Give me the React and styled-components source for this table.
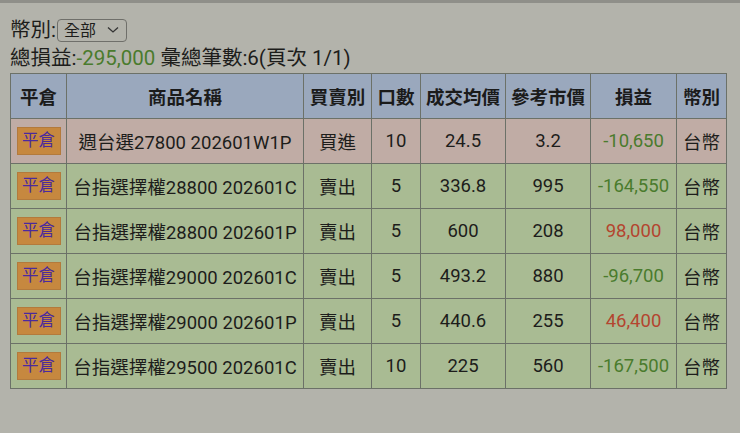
import React from "react";
import styled, { createGlobalStyle } from "styled-components";

const Global = createGlobalStyle`
  html, body { margin: 0; padding: 0; background: #b3b3ab; }
  body { font-family: Roboto, "Noto Sans CJK TC", sans-serif; color: #1d1d1b; }
`;

const Page = styled.div`
  width: 740px;
  height: 433px;
  box-sizing: border-box;
  border-top: 3px solid #8f8f89;
  padding: 15px 0 0 10px;
  background: #b3b3ab;
`;

const FilterRow = styled.div`
  display: flex;
  align-items: center;
  height: 24px;
  font-size: 20.5px;
  line-height: 24px;
`;

const SelectBox = styled.div`
  display: flex;
  align-items: center;
  justify-content: space-between;
  box-sizing: border-box;
  width: 70px;
  height: 23px;
  margin-left: 1px;
  padding: 0 7px 0 6px;
  border: 1px solid #6f6f6a;
  border-radius: 4px;
  font-size: 16px;
  line-height: 21px;
`;

const Summary = styled.div`
  height: 28px;
  margin-top: 2px;
  font-size: 20.5px;
  line-height: 28px;
  white-space: nowrap;
`;

const Loss = styled.span`
  color: ${(p) => (p.$neg ? "#4a7b2d" : "#b4452f")};
`;

const Table = styled.table`
  border-collapse: collapse;
  table-layout: fixed;
  width: 716px;
  font-size: 18.5px;
  margin-top: 1px;
`;

const Th = styled.th`
  height: 44px;
  padding: 0;
  background: #9aa8bd;
  border: 1px solid #6c7168;
  font-weight: bold;
  text-align: center;
  color: #1b1b1b;
`;

const Row = styled.tr`
  background: ${(p) => (p.$buy ? "#c0aca5" : "#a9bb93")};
`;

const Td = styled.td`
  height: 44px;
  padding: 0;
  border: 1px solid #6c7168;
  text-align: center;
  white-space: nowrap;
  color: ${(p) => p.$color || "#1d1d1b"};
`;

const CloseBtn = styled.span`
  display: inline-block;
  width: 44px;
  height: 28px;
  box-sizing: border-box;
  background: #c6883f;
  border: 1px solid #b37a3c;
  color: #4a2a9e;
  font-size: 16.5px;
  font-weight: normal;
  line-height: 26px;
  text-align: center;
  vertical-align: middle;
`;

const rows = [
  { buy: true, name: "週台選27800 202601W1P", side: "買進", qty: 10, avg: "24.5", ref: "3.2", pl: "-10,650" },
  { name: "台指選擇權28800 202601C", side: "賣出", qty: 5, avg: "336.8", ref: "995", pl: "-164,550" },
  { name: "台指選擇權28800 202601P", side: "賣出", qty: 5, avg: "600", ref: "208", pl: "98,000" },
  { name: "台指選擇權29000 202601C", side: "賣出", qty: 5, avg: "493.2", ref: "880", pl: "-96,700" },
  { name: "台指選擇權29000 202601P", side: "賣出", qty: 5, avg: "440.6", ref: "255", pl: "46,400" },
  { name: "台指選擇權29500 202601C", side: "賣出", qty: 10, avg: "225", ref: "560", pl: "-167,500" },
];

const widths = [56, 237, 68, 49, 85, 85, 86, 50];
const heads = ["平倉", "商品名稱", "買賣別", "口數", "成交均價", "參考市價", "損益", "幣別"];

export default function App() {
  return (
    <>
      <Global />
      <Page>
        <FilterRow>
          幣別:
          <SelectBox>
            <span>全部</span>
            <svg width="12" height="8" viewBox="0 0 12 8">
              <path d="M1 1.5 L6 6 L11 1.5" fill="none" stroke="#333" strokeWidth="1.3" />
            </svg>
          </SelectBox>
        </FilterRow>
        <Summary>
          總損益:<Loss $neg>-295,000</Loss> 彙總筆數:6(頁次 1/1)
        </Summary>
        <Table>
          <colgroup>
            {widths.map((w, i) => (
              <col key={i} style={{ width: w }} />
            ))}
          </colgroup>
          <thead>
            <tr>
              {heads.map((h) => (
                <Th key={h}>{h}</Th>
              ))}
            </tr>
          </thead>
          <tbody>
            {rows.map((r, i) => (
              <Row key={i} $buy={r.buy}>
                <Td>
                  <CloseBtn>平倉</CloseBtn>
                </Td>
                <Td>{r.name}</Td>
                <Td>{r.side}</Td>
                <Td>{r.qty}</Td>
                <Td>{r.avg}</Td>
                <Td>{r.ref}</Td>
                <Td $color={r.pl.startsWith("-") ? "#4a7b2d" : "#b4452f"}>{r.pl}</Td>
                <Td>台幣</Td>
              </Row>
            ))}
          </tbody>
        </Table>
      </Page>
    </>
  );
}
